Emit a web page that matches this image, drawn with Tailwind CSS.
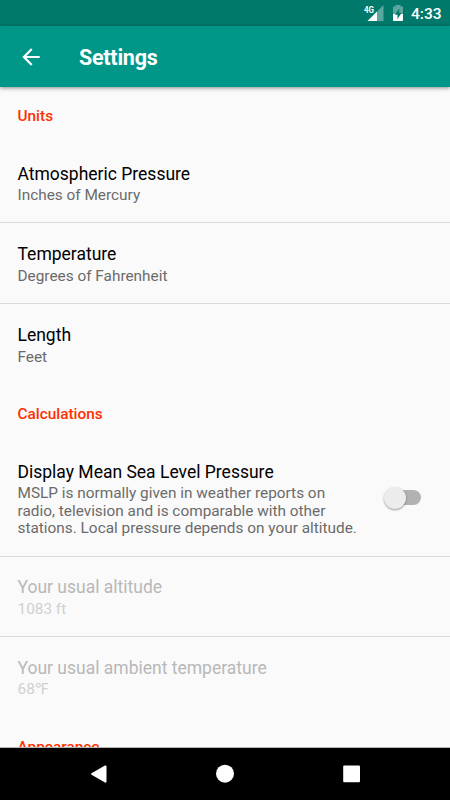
<!DOCTYPE html>
<html lang="en">
<head>
<meta charset="utf-8">
<title>Settings</title>
<script src="https://cdn.jsdelivr.net/npm/@tailwindcss/browser@4"></script>
</head>
<body class="w-[450px] h-[800px] overflow-hidden bg-[#fafafa] font-[Roboto,sans-serif] flex flex-col">
  <div class="h-[26px] shrink-0 bg-[#00796b] flex items-center justify-end pr-[9px] text-white">
    <svg class="w-[47px] h-[26px]" viewBox="0 0 47 26">
      <text x="7" y="13" font-size="9.500" font-weight="700" textLength="10" lengthAdjust="spacingAndGlyphs" fill="#fff">4G</text>
      <path d="M26.500 5v16H20V11.500z" fill="#fff" fill-opacity=".35"/>
      <path d="M10.500 21L20 11.500V21z" fill="#fff"/>
      <path d="M36 6.500h2.500V5h5v1.500H46V14H36z" fill="#fff" fill-opacity=".35"/>
      <path d="M36 14h10v6.200q0 .8-.8.8h-8.400q-.8 0-.8-.8z" fill="#fff"/>
      <path d="M42.200 8.500l-4.200 6.300h2.500v4.200l4-6h-2.300z" fill="#00796b"/>
    </svg>
    <span class="ml-[7px] w-[30px] whitespace-nowrap text-[15.5px] font-medium leading-[26px] pt-[2px]">4:33</span>
  </div>
  <header class="relative z-10 h-[61px] shrink-0 bg-[#009688] flex items-center shadow-[0_1px_4px_rgba(0,0,0,0.45)]">
    <svg class="ml-[18px] w-[26px] h-[26px]" viewBox="0 0 24 24" fill="#fff"><path d="M20 11H7.830l5.590-5.590L12 4l-8 8 8 8 1.410-1.410L7.830 13H20v-2z"/></svg>
    <h1 class="ml-[35px] pt-[3px] text-[21.5px] tracking-[-0.25px] font-bold text-white">Settings</h1>
  </header>
  <main class="h-[661px] shrink-0 overflow-hidden border-b border-[#b5b5b5] text-[15.36px] leading-[18px] text-[#6b6b6b]">
    <h2 class="h-[55px] px-[17.5px] pt-[20px] font-medium text-[#ff3000]">Units</h2>
    <div class="h-[81px] px-[17.5px] pt-[22px] border-b border-[#dadada]">
      <div class="text-[17.5px] leading-[21px] text-black">Atmospheric Pressure</div>
      <div class="pt-[1px]">Inches of Mercury</div>
    </div>
    <div class="h-[81px] px-[17.5px] pt-[21px] border-b border-[#dadada]">
      <div class="text-[17.5px] leading-[21px] text-black">Temperature</div>
      <div class="pt-[2px]">Degrees of Fahrenheit</div>
    </div>
    <div class="h-[80px] px-[17.5px] pt-[21px]">
      <div class="text-[17.5px] leading-[21px] text-black">Length</div>
      <div class="pt-[2px]">Feet</div>
    </div>
    <h2 class="h-[55px] px-[17.5px] pt-[21px] font-medium text-[#ff3000]">Calculations</h2>
    <div class="h-[118px] pl-[17.5px] pr-[29px] border-b border-[#dadada] flex items-center justify-between">
      <div class="w-[345px] pt-[5px]">
        <div class="text-[17.5px] leading-[21px] text-black">Display Mean Sea Level Pressure</div>
        <div class="pt-[2px] leading-[17.9px] whitespace-nowrap">MSLP is normally given in weather reports on<br>radio, television and is comparable with other<br>stations. Local pressure depends on your altitude.</div>
      </div>
      <div class="w-[37px] h-[22px] flex items-center">
        <div class="w-[22px] h-[22px] shrink-0 rounded-full bg-[#ececec] shadow-[0_1px_2px_rgba(0,0,0,0.4)] z-10"></div>
        <div class="-ml-[18px] w-[33px] h-[15px] shrink-0 rounded-full bg-[#b2b2b2]"></div>
      </div>
    </div>
    <div class="h-[80px] px-[17.5px] pt-[20px] border-b border-[#dadada] text-[#d0d0d0]">
      <div class="text-[17.5px] leading-[21px] text-[#b8b8b8]">Your usual altitude</div>
      <div class="pt-[2px]">1083 ft</div>
    </div>
    <div class="h-[80px] px-[17.5px] pt-[21px] text-[#d0d0d0]">
      <div class="text-[17.5px] leading-[21px] text-[#b8b8b8]">Your usual ambient temperature</div>
      <div class="pt-[1px]">68℉</div>
    </div>
    <h2 class="h-[55px] px-[17.5px] pt-[21px] font-medium text-[#ff3000]">Appearance</h2>
  </main>
  <nav class="h-[52px] shrink-0 bg-black">
    <svg class="w-[450px] h-[52px]" viewBox="0 0 450 52" fill="#fff">
      <path d="M91.500 25.200L105 17.500Q106.500 17 106.500 18.500V33.500Q106.500 35 105 34.500L91.500 26.800Q90.500 26 91.500 25.200z"/>
      <circle cx="225" cy="25.700" r="9"/>
      <rect x="343.200" y="17.500" width="16.800" height="16.700" rx="1"/>
    </svg>
  </nav>
</body>
</html>
